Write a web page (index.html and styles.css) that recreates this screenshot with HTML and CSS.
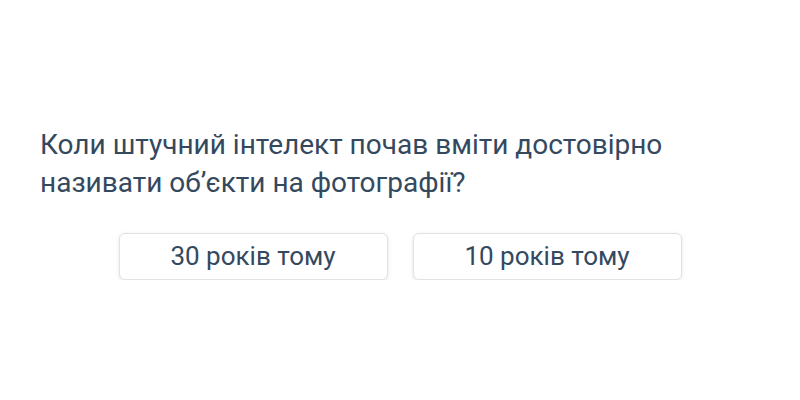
FILE: index.html
```html
<!DOCTYPE html>
<html lang="uk">
<head>
  <meta charset="UTF-8" />
  <meta name="viewport" content="width=device-width, initial-scale=1.0"/>
  <title>Вікторина</title>
  <link rel="stylesheet" href="styles.css">
</head>
<body>
  <main class="quiz">
    <h1 class="question">Коли штучний інтелект почав вміти достовірно називати об’єкти на фотографії?</h1>
    <div class="answers">
      <button class="answer">30 років тому</button>
      <button class="answer">10 років тому</button>
    </div>
  </main>
</body>
</html>
```

FILE: styles.css
```css
:root {
  --text: #34495e;
  --border: #e2e2e2;
  --shadow: 0 1px 4px rgba(0, 0, 0, 0.1);
}

* {
  margin: 0;
  padding: 0;
  box-sizing: border-box;
}

body {
  font-family: Roboto, "Noto Sans", sans-serif;
  background: #fff;
  color: var(--text);
}

.quiz {
  padding: 126px 40px 0;
}

.question {
  font-size: 28px;
  font-weight: 400;
  line-height: 1.35;
  max-width: 680px;
  margin-bottom: 31px;
}

.answers {
  display: flex;
  justify-content: center;
  gap: 25px;
}

.answer {
  width: 269px;
  height: 47px;
  font-family: inherit;
  font-size: 26px;
  color: var(--text);
  background: #fff;
  border: 1px solid var(--border);
  border-radius: 6px;
  box-shadow: var(--shadow);
  cursor: pointer;
}
```
